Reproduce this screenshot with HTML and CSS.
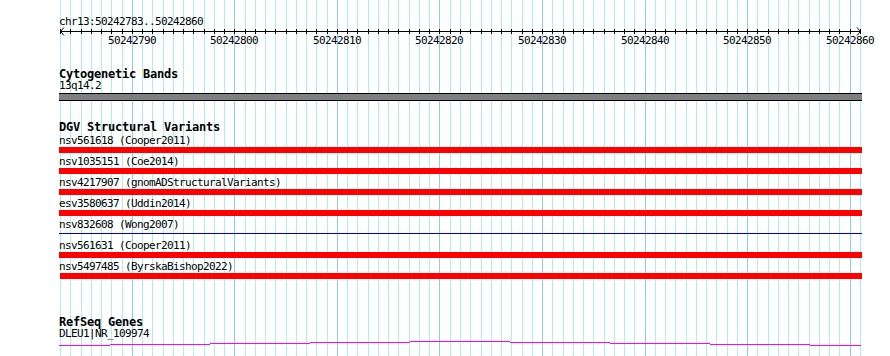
FILE: index.html
```html
<!DOCTYPE html>
<html>
<head>
<meta charset="utf-8">
<title>Genome browser</title>
<link rel="stylesheet" href="styles.css">
</head>
<body>
<div class="browser">
  <svg class="grid" width="890" height="356" viewBox="0 0 890 356">
    <path class="grid-minor" d="M60.5 0V356M70.5 0V356M81.5 0V356M91.5 0V356M101.5 0V356M111.5 0V356M122.5 0V356M142.5 0V356M152.5 0V356M163.5 0V356M173.5 0V356M183.5 0V356M193.5 0V356M204.5 0V356M214.5 0V356M224.5 0V356M245.5 0V356M255.5 0V356M265.5 0V356M275.5 0V356M286.5 0V356M296.5 0V356M306.5 0V356M316.5 0V356M327.5 0V356M347.5 0V356M357.5 0V356M368.5 0V356M378.5 0V356M388.5 0V356M398.5 0V356M409.5 0V356M419.5 0V356M429.5 0V356M450.5 0V356M460.5 0V356M470.5 0V356M481.5 0V356M491.5 0V356M501.5 0V356M511.5 0V356M522.5 0V356M532.5 0V356M552.5 0V356M563.5 0V356M573.5 0V356M583.5 0V356M593.5 0V356M604.5 0V356M614.5 0V356M624.5 0V356M634.5 0V356M655.5 0V356M665.5 0V356M675.5 0V356M686.5 0V356M696.5 0V356M706.5 0V356M716.5 0V356M727.5 0V356M737.5 0V356M757.5 0V356M768.5 0V356M778.5 0V356M788.5 0V356M798.5 0V356M809.5 0V356M819.5 0V356M829.5 0V356M839.5 0V356M860.5 0V356"/>
    <path class="grid-major" d="M132.5 0V356M234.5 0V356M337.5 0V356M439.5 0V356M542.5 0V356M645.5 0V356M747.5 0V356M850.5 0V356"/>
  </svg>

  <div class="tracks">
    <div class="ruler">
      <div class="ruler-title">chr13:50242783..50242860</div>
      <svg class="ruler-scale" width="831" height="20" viewBox="59 28 831 20">
        <path class="ruler-line" d="M60 31.5H861M64 27.5L60.5 31.5L64 35.5M857 27.5L860.5 31.5L857 35.5"/>
        <path class="ruler-ticks" d="M60.5 29v5M70.5 29v5M81.5 29v5M91.5 29v5M101.5 29v5M111.5 29v5M122.5 29v5M132.5 29v5M142.5 29v5M152.5 29v5M163.5 29v5M173.5 29v5M183.5 29v5M193.5 29v5M204.5 29v5M214.5 29v5M224.5 29v5M234.5 29v5M245.5 29v5M255.5 29v5M265.5 29v5M275.5 29v5M286.5 29v5M296.5 29v5M306.5 29v5M316.5 29v5M327.5 29v5M337.5 29v5M347.5 29v5M357.5 29v5M368.5 29v5M378.5 29v5M388.5 29v5M398.5 29v5M409.5 29v5M419.5 29v5M429.5 29v5M439.5 29v5M450.5 29v5M460.5 29v5M470.5 29v5M481.5 29v5M491.5 29v5M501.5 29v5M511.5 29v5M522.5 29v5M532.5 29v5M542.5 29v5M552.5 29v5M563.5 29v5M573.5 29v5M583.5 29v5M593.5 29v5M604.5 29v5M614.5 29v5M624.5 29v5M634.5 29v5M645.5 29v5M655.5 29v5M665.5 29v5M675.5 29v5M686.5 29v5M696.5 29v5M706.5 29v5M716.5 29v5M727.5 29v5M737.5 29v5M747.5 29v5M757.5 29v5M768.5 29v5M778.5 29v5M788.5 29v5M798.5 29v5M809.5 29v5M819.5 29v5M829.5 29v5M839.5 29v5M850.5 29v5M860.5 29v5"/>
        <g class="ruler-labels">
          <text x="132" y="44">50242790</text>
          <text x="234" y="44">50242800</text>
          <text x="337" y="44">50242810</text>
          <text x="439" y="44">50242820</text>
          <text x="542" y="44">50242830</text>
          <text x="645" y="44">50242840</text>
          <text x="747" y="44">50242850</text>
          <text x="850" y="44">50242860</text>
        </g>
      </svg>
    </div>

    <section class="track track-cyto">
      <h2 class="track-title">Cytogenetic Bands</h2>
      <div class="feature-label">13q14.2</div>
      <div class="cyto-band"></div>
    </section>

    <section class="track track-dgv">
      <h2 class="track-title">DGV Structural Variants</h2>
      <div class="sv-list">
        <div class="sv"><div class="feature-label">nsv561618 (Cooper2011)</div><div class="sv-bar"></div></div>
        <div class="sv"><div class="feature-label">nsv1035151 (Coe2014)</div><div class="sv-bar"></div></div>
        <div class="sv"><div class="feature-label">nsv4217907 (gnomADStructuralVariants)</div><div class="sv-bar"></div></div>
        <div class="sv"><div class="feature-label">esv3580637 (Uddin2014)</div><div class="sv-bar"></div></div>
        <div class="sv"><div class="feature-label">nsv832608 (Wong2007)</div><div class="sv-line"></div></div>
        <div class="sv"><div class="feature-label">nsv561631 (Cooper2011)</div><div class="sv-bar"></div></div>
        <div class="sv"><div class="feature-label">nsv5497485 (ByrskaBishop2022)</div><div class="sv-bar sv-bar-inset"></div></div>
      </div>
    </section>

    <section class="track track-refseq">
      <h2 class="track-title">RefSeq Genes</h2>
      <div class="feature-label">DLEU1|NR_109974</div>
      <svg class="gene" width="803" height="6" viewBox="59 340 803 6">
        <path class="gene-line" d="M59 345.5H110M110 344.5H210M210 343.5H310M310 342.5H410M410 341.5H510M510 342.5H610M610 343.5H710M710 344.5H810M810 345.5H861"/>
      </svg>
    </section>
  </div>
</div>
</body>
</html>
```

FILE: styles.css
```css
html, body {
  margin: 0;
  padding: 0;
  background: #ffffff;
}

body {
  width: 890px;
  height: 356px;
  overflow: hidden;
}

.browser {
  position: relative;
  width: 890px;
  height: 356px;
}

.grid {
  position: absolute;
  left: 0;
  top: 0;
  display: block;
}

.grid-minor {
  stroke: #afeeee;
  stroke-width: 1;
  fill: none;
}

.grid-major {
  stroke: #87cefa;
  stroke-width: 1;
  fill: none;
}

.tracks {
  position: relative;
  padding: 16px 0 0 59px;
  font-family: "DejaVu Sans Mono", "Liberation Mono", monospace;
  font-size: 11px;
  letter-spacing: -0.62px;
  line-height: 12px;
  color: #000000;
}

.ruler-title {
  height: 12px;
  white-space: nowrap;
}

.ruler-scale {
  display: block;
  overflow: visible;
}

.ruler-line,
.ruler-ticks {
  stroke: #000000;
  stroke-width: 1;
  fill: none;
}

.ruler-labels text {
  font-family: "DejaVu Sans Mono", "Liberation Mono", monospace;
  font-size: 11px;
  letter-spacing: -0.62px;
  text-anchor: middle;
  fill: #000000;
}

.track-title {
  margin: 0;
  font-size: 12px;
  font-weight: bold;
  letter-spacing: -0.22px;
  line-height: 11px;
  height: 11px;
  white-space: nowrap;
}

.feature-label {
  height: 12px;
  white-space: nowrap;
}

.track-cyto {
  margin-top: 21px;
}

.cyto-band {
  margin-top: 1px;
  width: 803px;
  height: 6px;
  background: #808080;
  border-top: 1px solid #000000;
  border-bottom: 1px solid #000000;
}

.track-dgv {
  margin-top: 21px;
}

.sv-list {
  margin-top: 2px;
}

.sv {
  height: 21px;
}

.sv-bar {
  width: 803px;
  height: 6px;
  background: #ff0000;
}

.sv-bar-inset {
  margin-left: 1px;
  width: 802px;
}

.sv-line {
  margin-top: 2px;
  width: 803px;
  height: 1px;
  background: #0000cd;
}

.track-refseq {
  margin-top: 35px;
}

.gene {
  display: block;
}

.gene-line {
  stroke: #ff00ff;
  stroke-width: 1;
  fill: none;
}
```
